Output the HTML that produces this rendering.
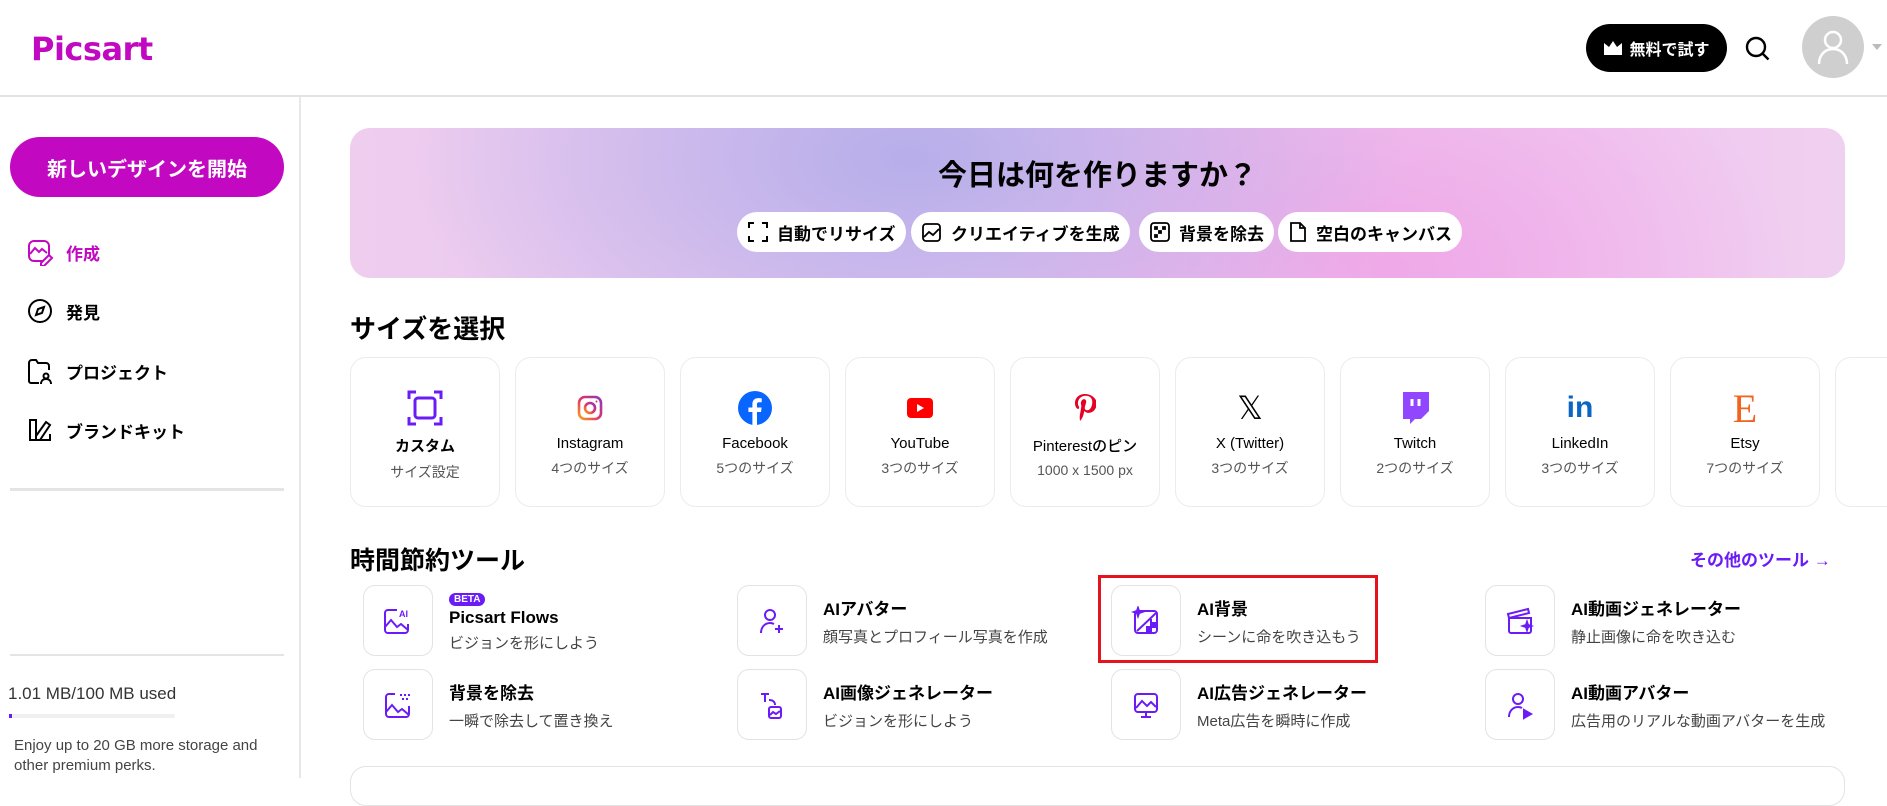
<!DOCTYPE html>
<html><head><meta charset="utf-8"><style>
*{box-sizing:border-box;margin:0;padding:0}
body{width:1887px;height:778px;overflow:hidden;background:#fff;font-family:"Liberation Sans","Noto Sans CJK JP",sans-serif;color:#000;position:relative}
.abs{position:absolute}
.hdr{left:0;top:0;width:1887px;height:97px;border-bottom:2px solid #e3e3e3}
.logo{left:31px;top:30px;font-size:32px;color:#c209c1;font-weight:bold;letter-spacing:-0.5px;font-family:"DejaVu Sans","Liberation Sans",sans-serif}
.side{left:299px;top:97px;width:2px;height:681px;background:#e8e8e8}
.btn{left:10px;top:137px;width:274px;height:60px;border-radius:30px;background:#c209c1;color:#fff;font-size:20px;font-weight:bold;display:flex;align-items:center;justify-content:center}
.nav{left:26px;font-size:17px;font-weight:bold;display:flex;align-items:center;gap:12px}
.banner{left:350px;top:128px;width:1495px;height:150px;border-radius:20px;background:radial-gradient(ellipse 500px 260px at 560px 30px,#b7aeea 0%,rgba(190,175,235,0) 100%),radial-gradient(ellipse 400px 260px at 1040px 140px,#efa8e8 0%,rgba(239,168,232,0) 100%),linear-gradient(90deg,#efcdef,#e0c4ee 35%,#edc0ec 60%,#f0c8f0 85%,#f0d0f0)}
.ttl{left:0;width:1495px;top:24px;text-align:center;font-size:29px;font-weight:bold}
.pill{top:84px;height:40px;border-radius:20px;background:#fff;font-size:17px;font-weight:bold;display:flex;align-items:center;padding:0 10px;gap:8px}
.h2{font-size:26px;font-weight:bold}
.card{top:357px;width:150px;height:150px;border:1px solid #ececec;border-radius:16px;text-align:center}
.card .ic{height:60px;margin-top:20px;display:flex;align-items:center;justify-content:center}
.card .n{font-size:15px;margin-top:-3px;font-weight:500}
.card .s{font-size:14px;color:#555;margin-top:6px}
.tool{display:flex;gap:16px;align-items:center}
.tb{width:70px;height:71px;border:1px solid #e3e3e3;border-radius:12px;display:flex;align-items:center;justify-content:center;flex:none}
.tt{font-size:17px;font-weight:bold}
.ts{font-size:15px;color:#444;margin-top:6px}
</style></head><body>
<div class="abs hdr"></div>
<div class="abs logo">Picsart</div>
<div class="abs" style="left:1586px;top:24px;width:141px;height:48px;border-radius:24px;background:#000;color:#fff;font-size:16px;font-weight:bold;display:flex;align-items:center;justify-content:center;gap:6px"><svg width="20" height="16" viewBox="0 0 20 16"><path d="M1 3l5 4 4-6 4 6 5-4v12H1z" fill="#fff"/></svg>無料で試す</div>
<svg class="abs" style="left:1744px;top:35px" width="28" height="28" viewBox="0 0 28 28"><circle cx="12" cy="12" r="9" fill="none" stroke="#000" stroke-width="2.4"/><path d="M18.5 18.5l6 6" stroke="#000" stroke-width="2.4"/></svg>
<div class="abs" style="left:1802px;top:16px;width:62px;height:62px;border-radius:50%;background:#cfcfcf"></div>
<svg class="abs" style="left:1816px;top:28px" width="34" height="38" viewBox="0 0 34 38"><circle cx="17" cy="12" r="8" fill="none" stroke="#fff" stroke-width="2.5"/><path d="M3 36c0-9 6-15 14-15s14 6 14 15" fill="none" stroke="#fff" stroke-width="2.5"/></svg>
<div class="abs" style="left:1872px;top:44px;border:5px solid transparent;border-top:6px solid #bbb"></div>

<div class="abs side"></div>
<div class="abs btn">新しいデザインを開始</div>
<div class="abs nav" style="top:238px;color:#c209c1"><svg width="28" height="28" viewBox="0 0 28 28" fill="none" stroke="#c209c1" stroke-width="2"><rect x="3" y="3" width="20" height="20" rx="5"/><path d="M4 16l5-6 4 4 3-3 5 4"/><path d="M15 25l8-8 3 3-8 8h-3z" fill="#fff"/></svg>作成</div>
<div class="abs nav" style="top:297px"><svg width="28" height="28" viewBox="0 0 28 28" fill="none" stroke="#000" stroke-width="2"><circle cx="14" cy="14" r="11"/><path d="M18 10l-2 6-6 2 2-6z"/></svg>発見</div>
<div class="abs nav" style="top:357px"><svg width="28" height="28" viewBox="0 0 28 28" fill="none" stroke="#000" stroke-width="2"><path d="M3 24V6a3 3 0 013-3h4l2 3h8a3 3 0 013 3v4"/><path d="M3 24a2 2 0 002 2h8"/><circle cx="20" cy="19" r="2.5"/><path d="M15 27c0-3 2-5 5-5s5 2 5 5"/></svg>プロジェクト</div>
<div class="abs nav" style="top:416px"><svg width="28" height="28" viewBox="0 0 28 28" fill="none" stroke="#000" stroke-width="2"><path d="M4 4h6v20H4z"/><path d="M10 20L20 6l4 3-10 15H4"/><path d="M10 24h14v-6"/></svg>ブランドキット</div>
<div class="abs" style="left:10px;top:488px;width:274px;height:3px;background:#e4e4e4"></div>
<div class="abs" style="left:10px;top:654px;width:274px;height:2px;background:#e4e4e4"></div>
<div class="abs" style="left:8px;top:684px;font-size:17px;color:#333">1.01 MB/100 MB used</div>
<div class="abs" style="left:9px;top:714px;width:166px;height:4px;border-radius:2px;background:#f0f0f0"><div style="width:3px;height:4px;background:#6b1cf6"></div></div>
<div class="abs" style="left:14px;top:736px;font-size:15px;color:#444;line-height:20px">Enjoy up to 20 GB more storage and<br>other premium perks.</div>

<div class="abs banner">
<div class="abs ttl">今日は何を作りますか？</div>
<div class="abs pill" style="left:387px"><svg width="22" height="22" viewBox="0 0 22 22" fill="none" stroke="#000" stroke-width="2"><path d="M2 7V2h5M15 2h5v5M20 15v5h-5M7 20H2v-5"/></svg>自動でリサイズ</div>
<div class="abs pill" style="left:561px"><svg width="22" height="22" viewBox="0 0 22 22" fill="none" stroke="#000" stroke-width="1.8"><rect x="2" y="3" width="17" height="17" rx="3"/><path d="M3 16l5-5 4 3 6-6"/></svg>クリエイティブを生成</div>
<div class="abs pill" style="left:789px"><svg width="22" height="22" viewBox="0 0 22 22" fill="none" stroke="#000" stroke-width="1.8"><rect x="2" y="2" width="18" height="18" rx="3"/><path d="M6 6h2v2H6zM10 10h2v2h-2zM6 14h2v2H6zM14 6h2v2h-2z" fill="#000"/></svg>背景を除去</div>
<div class="abs pill" style="left:928px"><svg width="20" height="22" viewBox="0 0 20 22" fill="none" stroke="#000" stroke-width="1.8"><path d="M3 2h9l5 5v13H3z"/><path d="M12 2v5h5"/></svg>空白のキャンバス</div>
</div>

<div class="abs h2" style="left:350px;top:309px">サイズを選択</div>
<div class="abs card" style="left:350px"><div class="ic"><svg width="36" height="36" viewBox="0 0 36 36" fill="none" stroke="#6b1cf6" stroke-width="3"><path d="M2 9V2h7M27 2h7v7M34 27v7h-7M9 34H2v-7"/><rect x="8" y="8" width="20" height="20" rx="3"/></svg></div><div class="n" style="font-weight:bold">カスタム</div><div class="s">サイズ設定</div></div>
<div class="abs card" style="left:515px"><div class="ic"><svg width="26" height="26" viewBox="0 0 26 26" fill="none" stroke-width="2.6"><defs><linearGradient id="ig" x1="0" y1="1" x2="1" y2="0"><stop offset="0" stop-color="#f9a01b"/><stop offset=".5" stop-color="#e1306c"/><stop offset="1" stop-color="#8a3ab9"/></linearGradient></defs><rect x="2" y="2" width="22" height="22" rx="6" stroke="url(#ig)"/><circle cx="13" cy="13" r="5" stroke="url(#ig)"/><circle cx="19.5" cy="6.5" r="1" fill="#c13584"/></svg></div><div class="n">Instagram</div><div class="s">4つのサイズ</div></div>
<div class="abs card" style="left:680px"><div class="ic"><svg width="34" height="34" viewBox="0 0 34 34"><circle cx="17" cy="17" r="17" fill="#0866ff"/><path d="M19 34V21h4l.6-4.5H19v-3c0-1.3.4-2.2 2.3-2.2h2.4V7.3c-.4 0-1.8-.2-3.5-.2-3.5 0-5.8 2.1-5.8 6v3.4h-4V21h4v13z" fill="#fff"/></svg></div><div class="n">Facebook</div><div class="s">5つのサイズ</div></div>
<div class="abs card" style="left:845px"><div class="ic"><svg width="26" height="20" viewBox="0 0 26 20"><rect width="26" height="20" rx="4" fill="#f00"/><path d="M10 6l7 4-7 4z" fill="#fff"/></svg></div><div class="n">YouTube</div><div class="s">3つのサイズ</div></div>
<div class="abs card" style="left:1010px"><div class="ic"><svg width="22" height="30" viewBox="0 0 22 30"><path d="M11 1C4 1 1 6 1 10c0 3 1 5 3 6 .4.2.7 0 .8-.4l.3-1.2c.1-.4 0-.5-.2-.9-.6-.8-1-1.8-1-3.2 0-4 3-7.6 7.8-7.6 4.3 0 6.6 2.6 6.6 6.1 0 4.6-2 8.5-5 8.5-1.7 0-2.9-1.4-2.5-3.1.5-2 1.4-4.2 1.4-5.7 0-1.3-.7-2.4-2.2-2.4-1.7 0-3.1 1.8-3.1 4.2 0 1.5.5 2.6.5 2.6L6 21.5c-.6 2.5-.1 5.7 0 6 0 .2.3.3.4.1.2-.2 2.2-2.8 2.9-5.3l1.1-4.4c.6 1.1 2.2 2 4 2 5.2 0 8.6-4.7 8.6-11C21 4.6 17 1 11 1z" fill="#e60023"/></svg></div><div class="n">Pinterestのピン</div><div class="s">1000 x 1500 px</div></div>
<div class="abs card" style="left:1175px"><div class="ic" style="font-size:32px;font-family:'DejaVu Sans',sans-serif">𝕏</div><div class="n">X (Twitter)</div><div class="s">3つのサイズ</div></div>
<div class="abs card" style="left:1340px"><div class="ic"><svg width="28" height="32" viewBox="0 0 28 32"><path d="M2 0h26v19l-8 8h-6l-5 5v-5H2z" fill="#9146ff"/><path d="M11 7v7M18 7v7" stroke="#fff" stroke-width="3"/></svg></div><div class="n">Twitch</div><div class="s">2つのサイズ</div></div>
<div class="abs card" style="left:1505px"><div class="ic" style="font-size:30px;font-weight:bold;color:#0a66c2">in</div><div class="n">LinkedIn</div><div class="s">3つのサイズ</div></div>
<div class="abs card" style="left:1670px"><div class="ic" style="font-size:40px;color:#f1641e;font-family:'Liberation Serif',serif">E</div><div class="n">Etsy</div><div class="s">7つのサイズ</div></div>
<div class="abs card" style="left:1835px"></div>

<div class="abs h2" style="left:350px;top:541px;font-size:25px">時間節約ツール</div>
<div class="abs" style="left:1690px;top:546px;font-size:17px;font-weight:bold;color:#6b1cf6">その他のツール →</div>

<div class="abs tool" style="left:363px;top:585px"><div class="tb"><svg width="30" height="28" viewBox="0 0 30 28" fill="none" stroke="#6b1cf6" stroke-width="2"><path d="M14 3H5a3 3 0 00-3 3v17a3 3 0 003 3h17a3 3 0 003-3v-6"/><path d="M2 20l6-7 6 7 4-3 7 6"/><text x="16" y="10" font-size="9" fill="#6b1cf6" stroke="none" font-weight="bold">AI</text></svg></div><div><div style="display:inline-block;background:#6b1cf6;color:#fff;font-size:10px;font-weight:bold;border-radius:8px;padding:1px 5px">BETA</div><div class="tt" style="margin-top:1px">Picsart Flows</div><div class="ts" style="margin-top:4px">ビジョンを形にしよう</div></div></div>
<div class="abs tool" style="left:737px;top:585px"><div class="tb"><svg width="30" height="30" viewBox="0 0 30 30" fill="none" stroke="#6b1cf6" stroke-width="2"><circle cx="13" cy="9" r="5"/><path d="M4 27c0-6 4-10 9-10 2 0 3 .5 4 1"/><path d="M22 19v8M18 23h8" /></svg></div><div><div class="tt">AIアバター</div><div class="ts">顔写真とプロフィール写真を作成</div></div></div>
<div class="abs tool" style="left:1111px;top:585px"><div class="tb"><svg width="30" height="30" viewBox="0 0 30 30" fill="none" stroke="#6b1cf6" stroke-width="2"><rect x="4" y="5" width="22" height="22" rx="3"/><path d="M6 25L25 7" /><path d="M16 25h4v-4h4v-4h-4v4h-4zM20 17v-4" fill="#6b1cf6"/><path d="M7 2l1 3 3 1-3 1-1 3-1-3-3-1 3-1z" fill="#6b1cf6"/></svg></div><div><div class="tt">AI背景</div><div class="ts">シーンに命を吹き込もう</div></div></div>
<div class="abs tool" style="left:1485px;top:585px"><div class="tb"><svg width="30" height="30" viewBox="0 0 30 30" fill="none" stroke="#6b1cf6" stroke-width="2"><path d="M4 12h22v13a2 2 0 01-2 2H6a2 2 0 01-2-2z"/><path d="M4 12l-1-4 20-5 1 4z"/><path d="M22 16l1 3 3 1-3 1-1 3-1-3-3-1 3-1z" fill="#6b1cf6"/></svg></div><div><div class="tt">AI動画ジェネレーター</div><div class="ts">静止画像に命を吹き込む</div></div></div>

<div class="abs" style="left:1098px;top:575px;width:280px;height:88px;border:3px solid #e4141e"></div>

<div class="abs tool" style="left:363px;top:669px"><div class="tb"><svg width="30" height="30" viewBox="0 0 30 30" fill="none" stroke="#6b1cf6" stroke-width="2"><path d="M12 4H6a3 3 0 00-3 3v17a3 3 0 003 3h17a3 3 0 003-3v-8"/><path d="M3 22l6-7 6 7 4-3 7 6"/><path d="M17 4h2v2h-2zM21 4h2v2h-2zM25 4h2v2h-2zM19 8h2v2h-2zM23 8h2v2h-2z" fill="#6b1cf6" stroke="none"/></svg></div><div><div class="tt">背景を除去</div><div class="ts">一瞬で除去して置き換え</div></div></div>
<div class="abs tool" style="left:737px;top:669px"><div class="tb"><svg width="30" height="30" viewBox="0 0 30 30" fill="none" stroke="#6b1cf6" stroke-width="2"><path d="M4 4h8M8 4v8"/><path d="M12 10c4 0 6 2 6 5"/><rect x="12" y="17" width="12" height="11" rx="2"/><path d="M13 25l3-3 3 2 4-3"/></svg></div><div><div class="tt">AI画像ジェネレーター</div><div class="ts">ビジョンを形にしよう</div></div></div>
<div class="abs tool" style="left:1111px;top:669px"><div class="tb"><svg width="30" height="30" viewBox="0 0 30 30" fill="none" stroke="#6b1cf6" stroke-width="2"><rect x="4" y="4" width="22" height="18" rx="3"/><path d="M5 18l6-7 5 5 4-4 5 5"/><path d="M15 22v5M10 27h10"/></svg></div><div><div class="tt">AI広告ジェネレーター</div><div class="ts">Meta広告を瞬時に作成</div></div></div>
<div class="abs tool" style="left:1485px;top:669px"><div class="tb"><svg width="30" height="30" viewBox="0 0 30 30" fill="none" stroke="#6b1cf6" stroke-width="2"><circle cx="13" cy="9" r="5"/><path d="M4 27c0-6 4-10 9-10 2 0 3 .5 4 1"/><path d="M19 20l7 4-7 4z" fill="#6b1cf6"/></svg></div><div><div class="tt">AI動画アバター</div><div class="ts">広告用のリアルな動画アバターを生成</div></div></div>

<div class="abs" style="left:350px;top:766px;width:1495px;height:40px;border:1px solid #e3e3e3;border-radius:16px"></div>
</body></html>
